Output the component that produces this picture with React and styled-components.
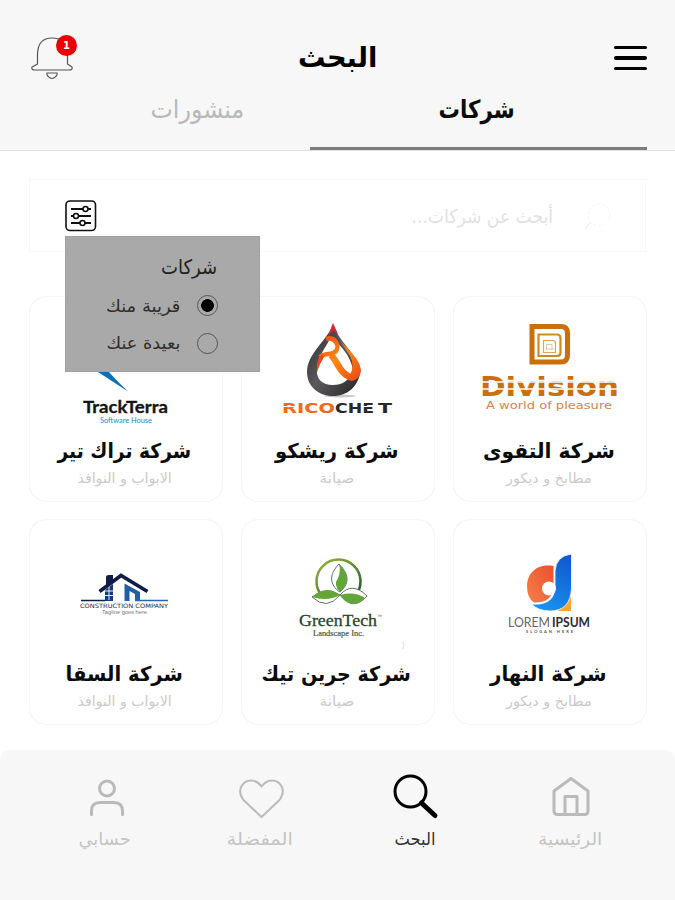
import { useLayoutEffect, useRef, useState } from "react";
import styled, { createGlobalStyle } from "styled-components";

// Arabic can't take letter-spacing, so a label is squeezed to its width instead
const Fit = ({ width, children }) => {
  const ref = useRef(null);
  const [scale, setScale] = useState(1);

  useLayoutEffect(() => {
    setScale(width / ref.current.offsetWidth);
  }, [width, children]);

  return (
    <FitBox $width={width}>
      <FitText ref={ref} style={{ transform: `scaleX(${scale})` }}>
        {children}
      </FitText>
    </FitBox>
  );
};

const DivisionLogo = () => (
  <LogoSvg viewBox="0 0 192 140">
    <path d="M78 29.500H107Q113.500 29.500 113.500 36V58Q113.500 65 107 65H78Z" fill="none" stroke="#c96f0c" strokeWidth="5" />
    <path d="M84.500 37.500H103Q106.500 37.500 106.500 41V55.500Q106.500 59 103 59H84.500Z" fill="none" stroke="#cf8a22" strokeWidth="2.200" />
    <path d="M89.500 43.500H99Q101.500 43.500 101.500 46V55.500H89.500Z" fill="none" stroke="#dba55d" strokeWidth="1.200" />
    <path d="M92.500 53V47.500H98V53M91.500 52H100" fill="none" stroke="#e5c295" strokeWidth="0.900" />
    <text x="26" y="99" fontSize="27" fontWeight="700" fontFamily="DejaVu Sans" fill="#c96f0c" textLength="139" lengthAdjust="spacingAndGlyphs">
      Division
    </text>
    <path d="M26 85H166M26 92H166" stroke="#fff" strokeWidth="1.500" />
    <text x="32" y="111.500" fontSize="10.500" fontFamily="DejaVu Sans" fill="#cf8650" textLength="126" lengthAdjust="spacingAndGlyphs">
      A world of pleasure
    </text>
  </LogoSvg>
);

const RicochetLogo = () => (
  <LogoSvg viewBox="0 0 192 140">
    <defs>
      <linearGradient id="flame" gradientUnits="userSpaceOnUse" x1="76" y1="38" x2="116" y2="84">
        <stop offset="0" stopColor="#e8401c" />
        <stop offset="0.5" stopColor="#ff8a12" />
        <stop offset="1" stopColor="#ea4a16" />
      </linearGradient>
      <linearGradient id="coal" x1="0" y1="0" x2="1" y2="1">
        <stop offset="0" stopColor="#2b2a2c" />
        <stop offset="0.5" stopColor="#5c595b" />
        <stop offset="1" stopColor="#242326" />
      </linearGradient>
    </defs>
    <ellipse cx="98" cy="99" rx="16" ry="1.500" fill="#c8c8c8" />
    <path
      fillRule="evenodd"
      fill="url(#coal)"
      d="M91 27C86 43 65 56 65 75C65 89 76 99 91 99C106 99 116 89 118 76C117 57 96 45 91 27ZM88 42C96 44 110 60 111 74C107 84 100 88 91 88C80 88 74 82 75 72C75 61 82 53 88 42Z"
    />
    <path d="M91 26L96 37L91 34L86 39Z" fill="#d8252e" />
    <path d="M84 42C93 39 98 49 94 54C90 59 83 55 78 60" fill="none" stroke="url(#flame)" strokeWidth="4.500" />
    <path d="M75 75Q74 63 80 57L82 60Q78 66 75 75Z" fill="#e8491c" />
    <path d="M89 58C96 65 98 78 111 81" fill="none" stroke="url(#flame)" strokeWidth="6.500" />
    <path fill="url(#flame)" d="M94 36C100 50 119 60 119 74Q118 83 109 84L108 78Q113 69 108 59Q102 50 94 36Z" />
    <text x="40" y="116" fontSize="14.500" fontWeight="700" fontFamily="DejaVu Sans" fill="#f2691f" textLength="53" lengthAdjust="spacingAndGlyphs">
      RICO
    </text>
    <text x="93" y="116" fontSize="14.500" fontWeight="700" fontFamily="DejaVu Sans" fill="#28272a" textLength="39" lengthAdjust="spacingAndGlyphs">
      CHE
    </text>
    <text x="136" y="116" fontSize="14.500" fontWeight="700" fontFamily="DejaVu Sans" fill="#28272a" textLength="14" lengthAdjust="spacingAndGlyphs">
      T
    </text>
    <path d="M40 109.500H56M121 109.500H132" stroke="#fff" strokeWidth="1" />
  </LogoSvg>
);

const TrackTerraLogo = () => (
  <LogoSvg viewBox="0 0 192 140">
    <path d="M58 64L68 75L98 94.500Q86 83 78 74L70 64Z" fill="#0c6fb8" />
    <path d="M104 73Q107 77 110 73Z" fill="#1c78bd" />
    <text x="53" y="116" fontSize="17" fontWeight="700" fontFamily="Lato" fill="#151515" stroke="#151515" strokeWidth="0.300" textLength="85" lengthAdjust="spacingAndGlyphs">
      TrackTerra
    </text>
    <text x="70" y="126" fontSize="7.500" fontFamily="Lato" fill="#2b87c6" textLength="52" lengthAdjust="spacingAndGlyphs">
      Software House
    </text>
  </LogoSvg>
);

const LoremLogo = () => (
  <LogoSvg viewBox="0 0 192 140">
    <defs>
      <linearGradient id="blueStem" x1="0.7" y1="0" x2="0.3" y2="1">
        <stop offset="0" stopColor="#1259cf" />
        <stop offset="1" stopColor="#1994f2" />
      </linearGradient>
      <linearGradient id="orangeBowl" x1="1" y1="0" x2="0" y2="1">
        <stop offset="0" stopColor="#ea502d" />
        <stop offset="1" stopColor="#f68049" />
      </linearGradient>
    </defs>
    <path d="M104 91L117 76V91Z" fill="#f9a72d" />
    <path d="M99.500 46C82 43 73 54 73 66Q73 78 80 82.500Q99 83 99.500 66Z" fill="url(#orangeBowl)" />
    <path
      d="M101 51Q102 36 117.500 34V69Q116 91 96 91Q84 91 77.500 84Q101 86 101 66Z"
      fill="url(#blueStem)"
      stroke="#fff"
      strokeWidth="0.800"
    />
    <circle cx="95" cy="68.500" r="7" fill="#fff" />
    <text x="54" y="106.500" fontSize="12.500" fontFamily="Lato" fill="#666" textLength="42" lengthAdjust="spacingAndGlyphs">
      LOREM
    </text>
    <text x="98" y="106.500" fontSize="12.500" fontWeight="700" fontFamily="Lato" fill="#2c2c2c" textLength="38" lengthAdjust="spacingAndGlyphs">
      IPSUM
    </text>
    <text x="72" y="113" fontSize="4" fontWeight="700" fontFamily="Lato" fill="#555" textLength="47">
      SLOGAN HERE
    </text>
  </LogoSvg>
);

const GreenTechLogo = () => (
  <LogoSvg viewBox="0 0 192 140">
    <defs>
      <linearGradient id="ring" x1="0" y1="0" x2="1" y2="1">
        <stop offset="0" stopColor="#9cb83d" />
        <stop offset="1" stopColor="#245a2b" />
      </linearGradient>
    </defs>
    <path d="M80 76A22 22 0 1 1 113 76" fill="none" stroke="url(#ring)" strokeWidth="2.600" />
    <path d="M98 72C87 65 87 54 97 44C109 56 106 65 98 72Z" fill="#fff" stroke="#4f6055" strokeWidth="0.900" />
    <path d="M97 44C109 56 106 65 98 72Q91 65 96 58Q99 51 97 44Z" fill="#62a638" />
    <path d="M98 75Q110 61 125 76Q111 92 98 75Z" fill="#fff" stroke="#4f6055" strokeWidth="0.900" />
    <path d="M98 75Q112 71 123 78Q110 91 98 75Z" fill="#62a638" />
    <path d="M98 75Q85 91 70 77Q84 66 98 75Z" fill="#fff" stroke="#4f6055" strokeWidth="0.900" />
    <path d="M98 75Q84 64 70 77Q86 82 98 75Z" fill="#62a638" />
    <text x="57" y="106" fontSize="17" fontFamily="Liberation Serif" fill="#294431" stroke="#294431" strokeWidth="0.300" textLength="78" lengthAdjust="spacingAndGlyphs">
      GreenTech
    </text>
    <text x="135" y="98" fontSize="5" fontFamily="Liberation Sans" fill="#666">™</text>
    <text x="71" y="116" fontSize="8" fontFamily="Liberation Serif" fill="#465b4c" stroke="#465b4c" strokeWidth="0.200" textLength="51" lengthAdjust="spacingAndGlyphs">
      Landscape Inc.
    </text>
    <path d="M161 122Q163 125 161 129" fill="none" stroke="#ddd" />
  </LogoSvg>
);

const ConstructionLogo = () => (
  <LogoSvg viewBox="0 0 192 140">
    <path d="M76 66V57Q76 55 79 55H83V62Z" fill="#111d48" />
    <path d="M75 70L83 64V81H75Z" fill="#193979" />
    <path d="M79 66V80M75 71H83M75 75.500H83" stroke="#fff" strokeWidth="0.900" />
    <path d="M69.500 71.500L91 55.500L117.500 71.500" fill="none" stroke="#111d48" strokeWidth="3.600" />
    <path d="M94.500 81V63.500L110 72V81H105V74L99.500 71V81Z" fill="#245da7" />
    <path d="M51 80.500H75" stroke="#111d48" strokeWidth="1.500" />
    <path d="M105 80.500H138" stroke="#2d65ad" strokeWidth="1.500" />
    <text x="50" y="88" fontSize="6" fontFamily="DejaVu Sans" fill="#222b3b" textLength="88" lengthAdjust="spacingAndGlyphs">
      CONSTRUCTION COMPANY
    </text>
    <text x="72" y="94" fontSize="5.500" fontFamily="Liberation Sans" fill="#777" textLength="45" lengthAdjust="spacingAndGlyphs">
      Tagline goes here
    </text>
  </LogoSvg>
);

const companies = [
  { name: "شركة التقوى", width: 132, category: "مطابخ و ديكور", categoryWidth: 86, Logo: DivisionLogo },
  { name: "شركة ريشكو", width: 124, category: "صيانة", categoryWidth: 35, Logo: RicochetLogo },
  { name: "شركة تراك تير", width: 134, category: "الابواب و النوافذ", categoryWidth: 94, Logo: TrackTerraLogo },
  { name: "شركة النهار", width: 117, category: "مطابخ و ديكور", categoryWidth: 86, Logo: LoremLogo },
  { name: "شركة جرين تيك", width: 149, category: "صيانة", categoryWidth: 35, Logo: GreenTechLogo },
  { name: "شركة السقا", width: 117, category: "الابواب و النوافذ", categoryWidth: 94, Logo: ConstructionLogo },
];

const HomeIcon = () => (
  <NavSvg viewBox="0 0 48 48">
    <path d="M8 19L25 6.500L42 19V39Q42 42.500 38.500 42.500H11.500Q8 42.500 8 39Z" />
    <path d="M19 42V24.500H31V42" />
  </NavSvg>
);

const SearchIcon = () => (
  <NavSvg viewBox="0 0 48 48">
    <circle cx="19.500" cy="19.500" r="15.500" />
    <path d="M30.500 31L44 43.500" strokeWidth="5" strokeLinecap="round" />
  </NavSvg>
);

const HeartIcon = () => (
  <NavSvg viewBox="0 0 48 48" $stroke={2}>
    <path d="M25.500 45L8 28.500C-1 17 8 8.500 15 8.500Q21 8.500 25.500 14.500Q30 8.500 36 8.500C43 8.500 52 17 43 28.500Z" />
  </NavSvg>
);

const UserIcon = () => (
  <NavSvg viewBox="0 0 48 48">
    <circle cx="26" cy="16.500" r="7.500" />
    <path d="M10.500 42.500V39Q10.500 30.500 19 30.500H33Q41.500 30.500 41.500 39V42.500" strokeLinecap="round" />
  </NavSvg>
);

const navItems = [
  { label: "الرئيسية", width: 64, Icon: HomeIcon },
  { label: "البحث", width: 41, Icon: SearchIcon, active: true },
  { label: "المفضلة", width: 67, Icon: HeartIcon },
  { label: "حسابي", width: 52, Icon: UserIcon },
];

export default function App() {
  const [tab, setTab] = useState("companies");
  const [distance, setDistance] = useState("near");

  return (
    <Page dir="rtl">
      <GlobalStyle />
      <Header>
        <TopBar>
          <MenuButton aria-label="القائمة">
            <MenuLine />
            <MenuLine />
            <MenuLine />
          </MenuButton>
          <Title>
            <Fit width={79}>البحث</Fit>
          </Title>
          <BellButton aria-label="الإشعارات">
            <svg width="48" height="48" viewBox="0 0 48 48" fill="none" stroke="#555" strokeWidth="1.200">
              <path d="M7.500 30V20Q8 4 22 4Q37 4 37.500 20V30L42 33Q43 36 39 36H5Q1 36 2 33Z" strokeLinejoin="round" />
              <path d="M17 39H27V41Q22 48 17 41Z" />
            </svg>
            <Badge>1</Badge>
          </BellButton>
        </TopBar>
        <Tabs>
          <Tab $wide $active={tab === "companies"} onClick={() => setTab("companies")}>
            <Fit width={76}>شركات</Fit>
          </Tab>
          <Tab $active={tab === "posts"} onClick={() => setTab("posts")}>
            <Fit width={94}>منشورات</Fit>
          </Tab>
        </Tabs>
      </Header>

      <Content>
        <SearchBox>
          <svg width="30" height="30" viewBox="0 0 30 30" fill="none" stroke="#f4f5f6">
            <circle cx="17" cy="14" r="11" strokeDasharray="3 2" />
            <path d="M8 22L3 28" stroke="#e8eaeb" />
          </svg>
          <Placeholder>
            <Fit width={142}>أبحث عن شركات...</Fit>
          </Placeholder>
          <FilterButton aria-label="تصفية">
            <svg width="32" height="32" viewBox="0 0 32 32" fill="none" stroke="#111" strokeWidth="1.600">
              <rect x="1" y="1" width="29.500" height="29.500" rx="4" />
              <path d="M6 9H18M23 9H26M6 16H9M14 16H26M6 23H15M20 23H26" strokeWidth="2" />
              <circle cx="20.500" cy="9" r="2.500" />
              <circle cx="11" cy="16" r="2.500" />
              <circle cx="17.500" cy="23" r="2.500" />
            </svg>
          </FilterButton>
          <FilterMenu>
            <FilterTitle>
              <Fit width={56}>شركات</Fit>
            </FilterTitle>
            <Option onClick={() => setDistance("near")}>
              <Radio $checked={distance === "near"} />
              <Fit width={74}>قريبة منك</Fit>
            </Option>
            <Option onClick={() => setDistance("far")}>
              <Radio $checked={distance === "far"} />
              <Fit width={74}>بعيدة عنك</Fit>
            </Option>
          </FilterMenu>
        </SearchBox>

        <Grid>
          {companies.map(({ name, width, category, categoryWidth, Logo }) => (
            <Card key={name}>
              <Logo />
              <CompanyName>
                <Fit width={width}>{name}</Fit>
              </CompanyName>
              <Category>
                <Fit width={categoryWidth}>{category}</Fit>
              </Category>
            </Card>
          ))}
        </Grid>
      </Content>

      <BottomNav>
        {navItems.map(({ label, width, Icon, active }) => (
          <NavItem key={label} $active={active}>
            <Icon />
            <NavLabel $active={active}>
              <Fit width={width}>{label}</Fit>
            </NavLabel>
          </NavItem>
        ))}
      </BottomNav>
    </Page>
  );
}

const GlobalStyle = createGlobalStyle`
  * {
    box-sizing: border-box;
  }

  body {
    margin: 0;
    background: #fff;
    font-family: "DejaVu Sans", sans-serif;
  }

  button {
    border: 0;
    padding: 0;
    background: none;
    font-family: inherit;
    cursor: pointer;
  }
`;

const Page = styled.div`
  display: flex;
  flex-direction: column;
  width: 675px;
  height: 900px;
  overflow: hidden;
`;

const FitBox = styled.span`
  display: flex;
  justify-content: center;
  width: ${({ $width }) => $width}px;
`;

const FitText = styled.span`
  flex: none;
  white-space: nowrap;
`;

const Header = styled.header`
  height: 151px;
  background: #f7f7f7;
  border-bottom: 1px solid #e2e2e2;
`;

const TopBar = styled.div`
  display: grid;
  grid-template-columns: 1fr auto 1fr;
  align-items: center;
  height: 86px;
  padding: 30px 28px 0;
`;

const MenuButton = styled.button`
  display: flex;
  flex-direction: column;
  gap: 7px;
  width: 33px;
`;

const MenuLine = styled.span`
  height: 3.5px;
  border-radius: 2px;
  background: #000;
`;

const Title = styled.h1`
  margin: 0;
  font-size: 28px;
  line-height: 48px;
  font-weight: 700;
`;

const BellButton = styled.button`
  position: relative;
  justify-self: end;
  width: 48px;
  height: 48px;
  margin-left: 2px;
`;

const Badge = styled.span`
  position: absolute;
  top: 1px;
  left: 26px;
  width: 21px;
  height: 21px;
  border-radius: 50%;
  background: #e90000;
  color: #fff;
  font-size: 10px;
  font-weight: 700;
  line-height: 21px;
  text-align: center;
`;

const Tabs = styled.div`
  display: flex;
  height: 64px;
  padding: 0 28px;
`;

const Tab = styled.button`
  display: flex;
  justify-content: center;
  align-items: flex-start;
  width: ${({ $wide }) => ($wide ? 337 : 226)}px;
  padding: ${({ $wide }) => ($wide ? "2px 3px 0 0" : "2px 0 0")};
  border-bottom: 3px solid ${({ $active }) => ($active ? "#7c7c7c" : "transparent")};
  color: ${({ $active }) => ($active ? "#0b0b0b" : "#b9b9b9")};
  font-size: 25px;
  font-weight: ${({ $active }) => ($active ? 700 : 400)};
  line-height: 44px;
`;

const Content = styled.main`
  flex: 1;
  padding: 28px 29px 0;
`;

const SearchBox = styled.div`
  position: relative;
  display: flex;
  align-items: center;
  height: 73px;
  padding: 0 33px 0 35px;
  border: 1px solid #f6f7f7;
`;

const Placeholder = styled.div`
  margin-right: 29px;
  color: #dfe2e5;
  font-size: 19px;
  line-height: 36px;
`;

const FilterButton = styled.button`
  width: 32px;
  height: 32px;
  margin-right: auto;

  svg {
    display: block;
  }
`;

const FilterMenu = styled.div`
  position: absolute;
  top: 56px;
  left: 35px;
  width: 195px;
  height: 136px;
  padding: 10px 41px 0 0;
  background: #a9a9a9;
  border: 1px solid #a0a0a0;
  z-index: 1;
`;

const FilterTitle = styled.div`
  margin-right: 1px;
  color: #222;
  font-size: 20px;
  line-height: 40px;
`;

const Option = styled.div`
  display: flex;
  align-items: center;
  gap: 17px;
  height: 37.5px;
  color: #2e2e2e;
  font-size: 17px;
  cursor: pointer;
`;

const Radio = styled.span`
  width: 21px;
  height: 21px;
  border: 1px solid #555;
  border-radius: 50%;
  background: ${({ $checked }) => ($checked ? "radial-gradient(circle, #000 6px, transparent 6.7px)" : "none")};
`;

const Grid = styled.div`
  display: grid;
  grid-template-columns: repeat(3, 192px);
  gap: 19.5px 20px;
  margin-top: 45px;
`;

const Card = styled.article`
  display: flex;
  flex-direction: column;
  align-items: center;
  height: 203.5px;
  border-radius: 16px;
  background: #fff;
  box-shadow: 0 0 2px rgba(0, 0, 0, 0.14);
`;

const LogoSvg = styled.svg`
  display: block;
  flex: none;
  width: 192px;
  height: 140px;
  direction: ltr;
`;

const CompanyName = styled.h2`
  margin: 0;
  padding-right: 3px;
  color: #0b0b0b;
  font-size: 20.5px;
  font-weight: 700;
  line-height: 29px;
`;

const Category = styled.div`
  padding-right: 2px;
  color: #cacaca;
  font-size: 14px;
  line-height: 25px;
`;

const BottomNav = styled.nav`
  display: grid;
  grid-template-columns: repeat(4, 155px);
  justify-content: center;
  height: 150px;
  padding-top: 22px;
  border-radius: 10px 10px 0 0;
  background: #f7f7f7;
`;

const NavItem = styled.div`
  display: flex;
  flex-direction: column;
  align-items: center;
  color: ${({ $active }) => ($active ? "#000" : "#bababa")};
`;

const NavSvg = styled.svg`
  width: 48px;
  height: 48px;
  fill: none;
  stroke: currentColor;
  stroke-width: ${({ $stroke = 3 }) => $stroke};
  stroke-linejoin: round;
`;

const NavLabel = styled.span`
  margin-top: 4px;
  color: ${({ $active }) => ($active ? "#333" : "#c4c4c4")};
  font-size: 17.5px;
  line-height: 30px;
`;
